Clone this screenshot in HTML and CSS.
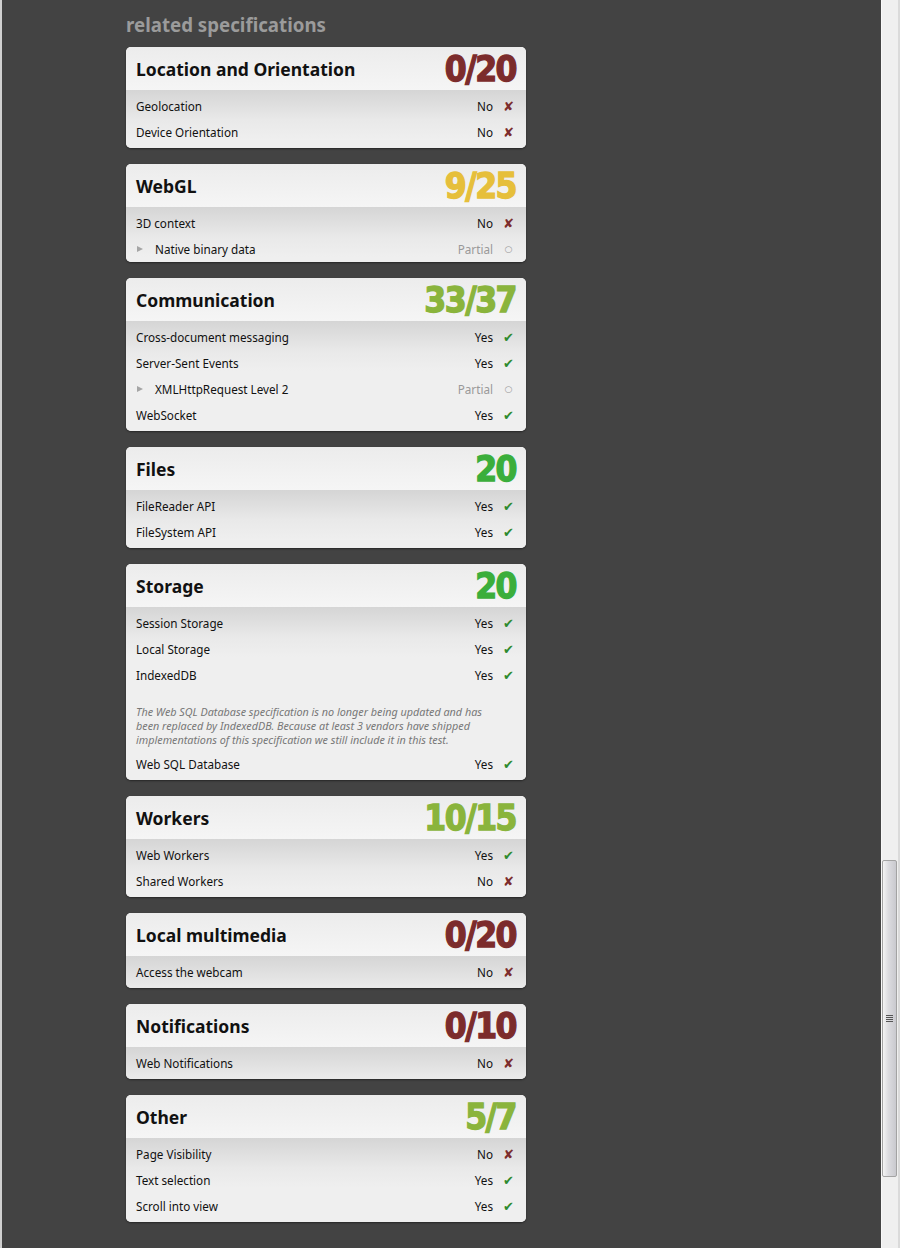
FILE: index.html
```html
<!DOCTYPE html>
<html>
<head>
<meta charset="utf-8">
<link rel="stylesheet" href="styles.css">
</head>
<body>
<div class="page">
  <div class="edge"></div>
  <main class="content">
    <h2 class="section-title">related specifications</h2>

    <section class="card">
      <header class="card-head"><h3>Location and Orientation</h3><span class="score s-red">0/20</span></header>
      <div class="card-body">
        <div class="row"><span class="label">Geolocation</span><span class="status">No</span><span class="ico no">✘</span></div>
        <div class="row"><span class="label">Device Orientation</span><span class="status">No</span><span class="ico no">✘</span></div>
      </div>
    </section>

    <section class="card card-tight">
      <header class="card-head"><h3>WebGL</h3><span class="score s-yellow">9/25</span></header>
      <div class="card-body">
        <div class="row"><span class="label">3D context</span><span class="status">No</span><span class="ico no">✘</span></div>
        <div class="row partial"><span class="tri"></span><span class="label">Native binary data</span><span class="status">Partial</span><span class="ico part">○</span></div>
      </div>
    </section>

    <section class="card">
      <header class="card-head"><h3>Communication</h3><span class="score s-olive">33/37</span></header>
      <div class="card-body">
        <div class="row"><span class="label">Cross-document messaging</span><span class="status">Yes</span><span class="ico yes">✔</span></div>
        <div class="row"><span class="label">Server-Sent Events</span><span class="status">Yes</span><span class="ico yes">✔</span></div>
        <div class="row partial"><span class="tri"></span><span class="label">XMLHttpRequest Level 2</span><span class="status">Partial</span><span class="ico part">○</span></div>
        <div class="row"><span class="label">WebSocket</span><span class="status">Yes</span><span class="ico yes">✔</span></div>
      </div>
    </section>

    <section class="card">
      <header class="card-head"><h3>Files</h3><span class="score s-green">20</span></header>
      <div class="card-body">
        <div class="row"><span class="label">FileReader API</span><span class="status">Yes</span><span class="ico yes">✔</span></div>
        <div class="row"><span class="label">FileSystem API</span><span class="status">Yes</span><span class="ico yes">✔</span></div>
      </div>
    </section>

    <section class="card">
      <header class="card-head"><h3>Storage</h3><span class="score s-green">20</span></header>
      <div class="card-body">
        <div class="row"><span class="label">Session Storage</span><span class="status">Yes</span><span class="ico yes">✔</span></div>
        <div class="row"><span class="label">Local Storage</span><span class="status">Yes</span><span class="ico yes">✔</span></div>
        <div class="row"><span class="label">IndexedDB</span><span class="status">Yes</span><span class="ico yes">✔</span></div>
        <p class="note">The Web SQL Database specification is no longer being updated and has been replaced by IndexedDB. Because at least 3 vendors have shipped implementations of this specification we still include it in this test.</p>
        <div class="row"><span class="label">Web SQL Database</span><span class="status">Yes</span><span class="ico yes">✔</span></div>
      </div>
    </section>

    <section class="card">
      <header class="card-head"><h3>Workers</h3><span class="score s-olive">10/15</span></header>
      <div class="card-body">
        <div class="row"><span class="label">Web Workers</span><span class="status">Yes</span><span class="ico yes">✔</span></div>
        <div class="row"><span class="label">Shared Workers</span><span class="status">No</span><span class="ico no">✘</span></div>
      </div>
    </section>

    <section class="card">
      <header class="card-head"><h3>Local multimedia</h3><span class="score s-red">0/20</span></header>
      <div class="card-body">
        <div class="row"><span class="label">Access the webcam</span><span class="status">No</span><span class="ico no">✘</span></div>
      </div>
    </section>

    <section class="card">
      <header class="card-head"><h3>Notifications</h3><span class="score s-red">0/10</span></header>
      <div class="card-body">
        <div class="row"><span class="label">Web Notifications</span><span class="status">No</span><span class="ico no">✘</span></div>
      </div>
    </section>

    <section class="card">
      <header class="card-head"><h3>Other</h3><span class="score s-olive">5/7</span></header>
      <div class="card-body">
        <div class="row"><span class="label">Page Visibility</span><span class="status">No</span><span class="ico no">✘</span></div>
        <div class="row"><span class="label">Text selection</span><span class="status">Yes</span><span class="ico yes">✔</span></div>
        <div class="row"><span class="label">Scroll into view</span><span class="status">Yes</span><span class="ico yes">✔</span></div>
      </div>
    </section>
  </main>
  <div class="scrollbar">
    <div class="thumb"><span class="grip"></span></div>
  </div>
</div>
</body>
</html>
```
FILE: styles.css
```css
html, body {
  margin: 0;
  padding: 0;
  height: 100%;
  overflow: hidden;
}
body {
  background: #434343;
  font-family: "Noto Sans", "Open Sans", sans-serif;
}
.page {
  display: flex;
  height: 1248px;
}
.edge {
  width: 2px;
  background: #d0d0d0;
  flex: none;
}
.content {
  flex: 1;
  padding: 12px 0 0 124px;
}
.section-title {
  margin: 0 0 9px;
  font-size: 18.7px;
  line-height: 26px;
  font-weight: bold;
  color: #9b9b9b;
}
.card {
  width: 400px;
  border-radius: 5px;
  overflow: hidden;
  margin-bottom: 16px;
  box-shadow: 0 1px 2px rgba(0,0,0,0.45);
  background: #efefef;
}
.card-head {
  height: 43px;
  display: flex;
  align-items: center;
  justify-content: space-between;
  padding: 0 10px;
  background: linear-gradient(#ececec, #f5f5f5);
}
.card-head h3 {
  margin: 0;
  font-size: 17.5px;
  font-weight: bold;
  color: #111;
}
.score {
  font-family: "DejaVu Sans", sans-serif;
  font-stretch: condensed;
  font-weight: bold;
  font-size: 35px;
  line-height: 40px;
  letter-spacing: -1.5px;
  -webkit-text-stroke: 1.3px currentColor;
}
.s-red { color: #7c2c2c; }
.s-yellow { color: #e6bf3b; }
.s-olive { color: #8ab43c; }
.s-green { color: #3bae3b; }
.card-body {
  padding: 3px 0;
  background: linear-gradient(#d5d5d5 0, #e9e9e9 30px, #efefef 50px);
}
.card-tight .card-body { padding-bottom: 0; }
.row {
  height: 26px;
  display: flex;
  align-items: center;
  padding: 0 10px;
  font-size: 11.7px;
  color: #111;
}
.row .label { flex: 1; }
.status {
  margin-right: 8px;
}
.partial .status { color: #999; }
.tri {
  width: 0;
  height: 0;
  border-top: 3.5px solid transparent;
  border-bottom: 3.5px solid transparent;
  border-left: 6px solid #a5a5a5;
  margin: 0 12px 0 1px;
}
.ico {
  width: 15px;
  text-align: center;
  font-family: "DejaVu Sans", sans-serif;
  font-size: 13px;
}
.ico.no { color: #7c2c2c; }
.ico.yes { color: #2e8a2e; }
.ico.part { color: #999; font-size: 9px; }
.note {
  margin: 17px 30px 4px 10px;
  font-size: 10.8px;
  line-height: 14px;
  font-style: italic;
  color: #777;
}
.scrollbar {
  width: 19px;
  flex: none;
  background: #efefef;
  border-left: 1px solid #f8f8f8;
  border-right: 2px solid #dadada;
  box-sizing: border-box;
  position: relative;
}
.thumb {
  position: absolute;
  left: 0;
  width: 15px;
  top: 860px;
  height: 317px;
  box-sizing: border-box;
  border: 1px solid #a3a3a3;
  border-radius: 2px;
  background: linear-gradient(to right, #f4f4f4, #dcdce0 40%, #c9c9ce);
  display: flex;
  align-items: center;
  justify-content: center;
}
.grip {
  width: 7px;
  height: 7px;
  background: repeating-linear-gradient(#555 0 1px, transparent 1px 2px);
}
```
